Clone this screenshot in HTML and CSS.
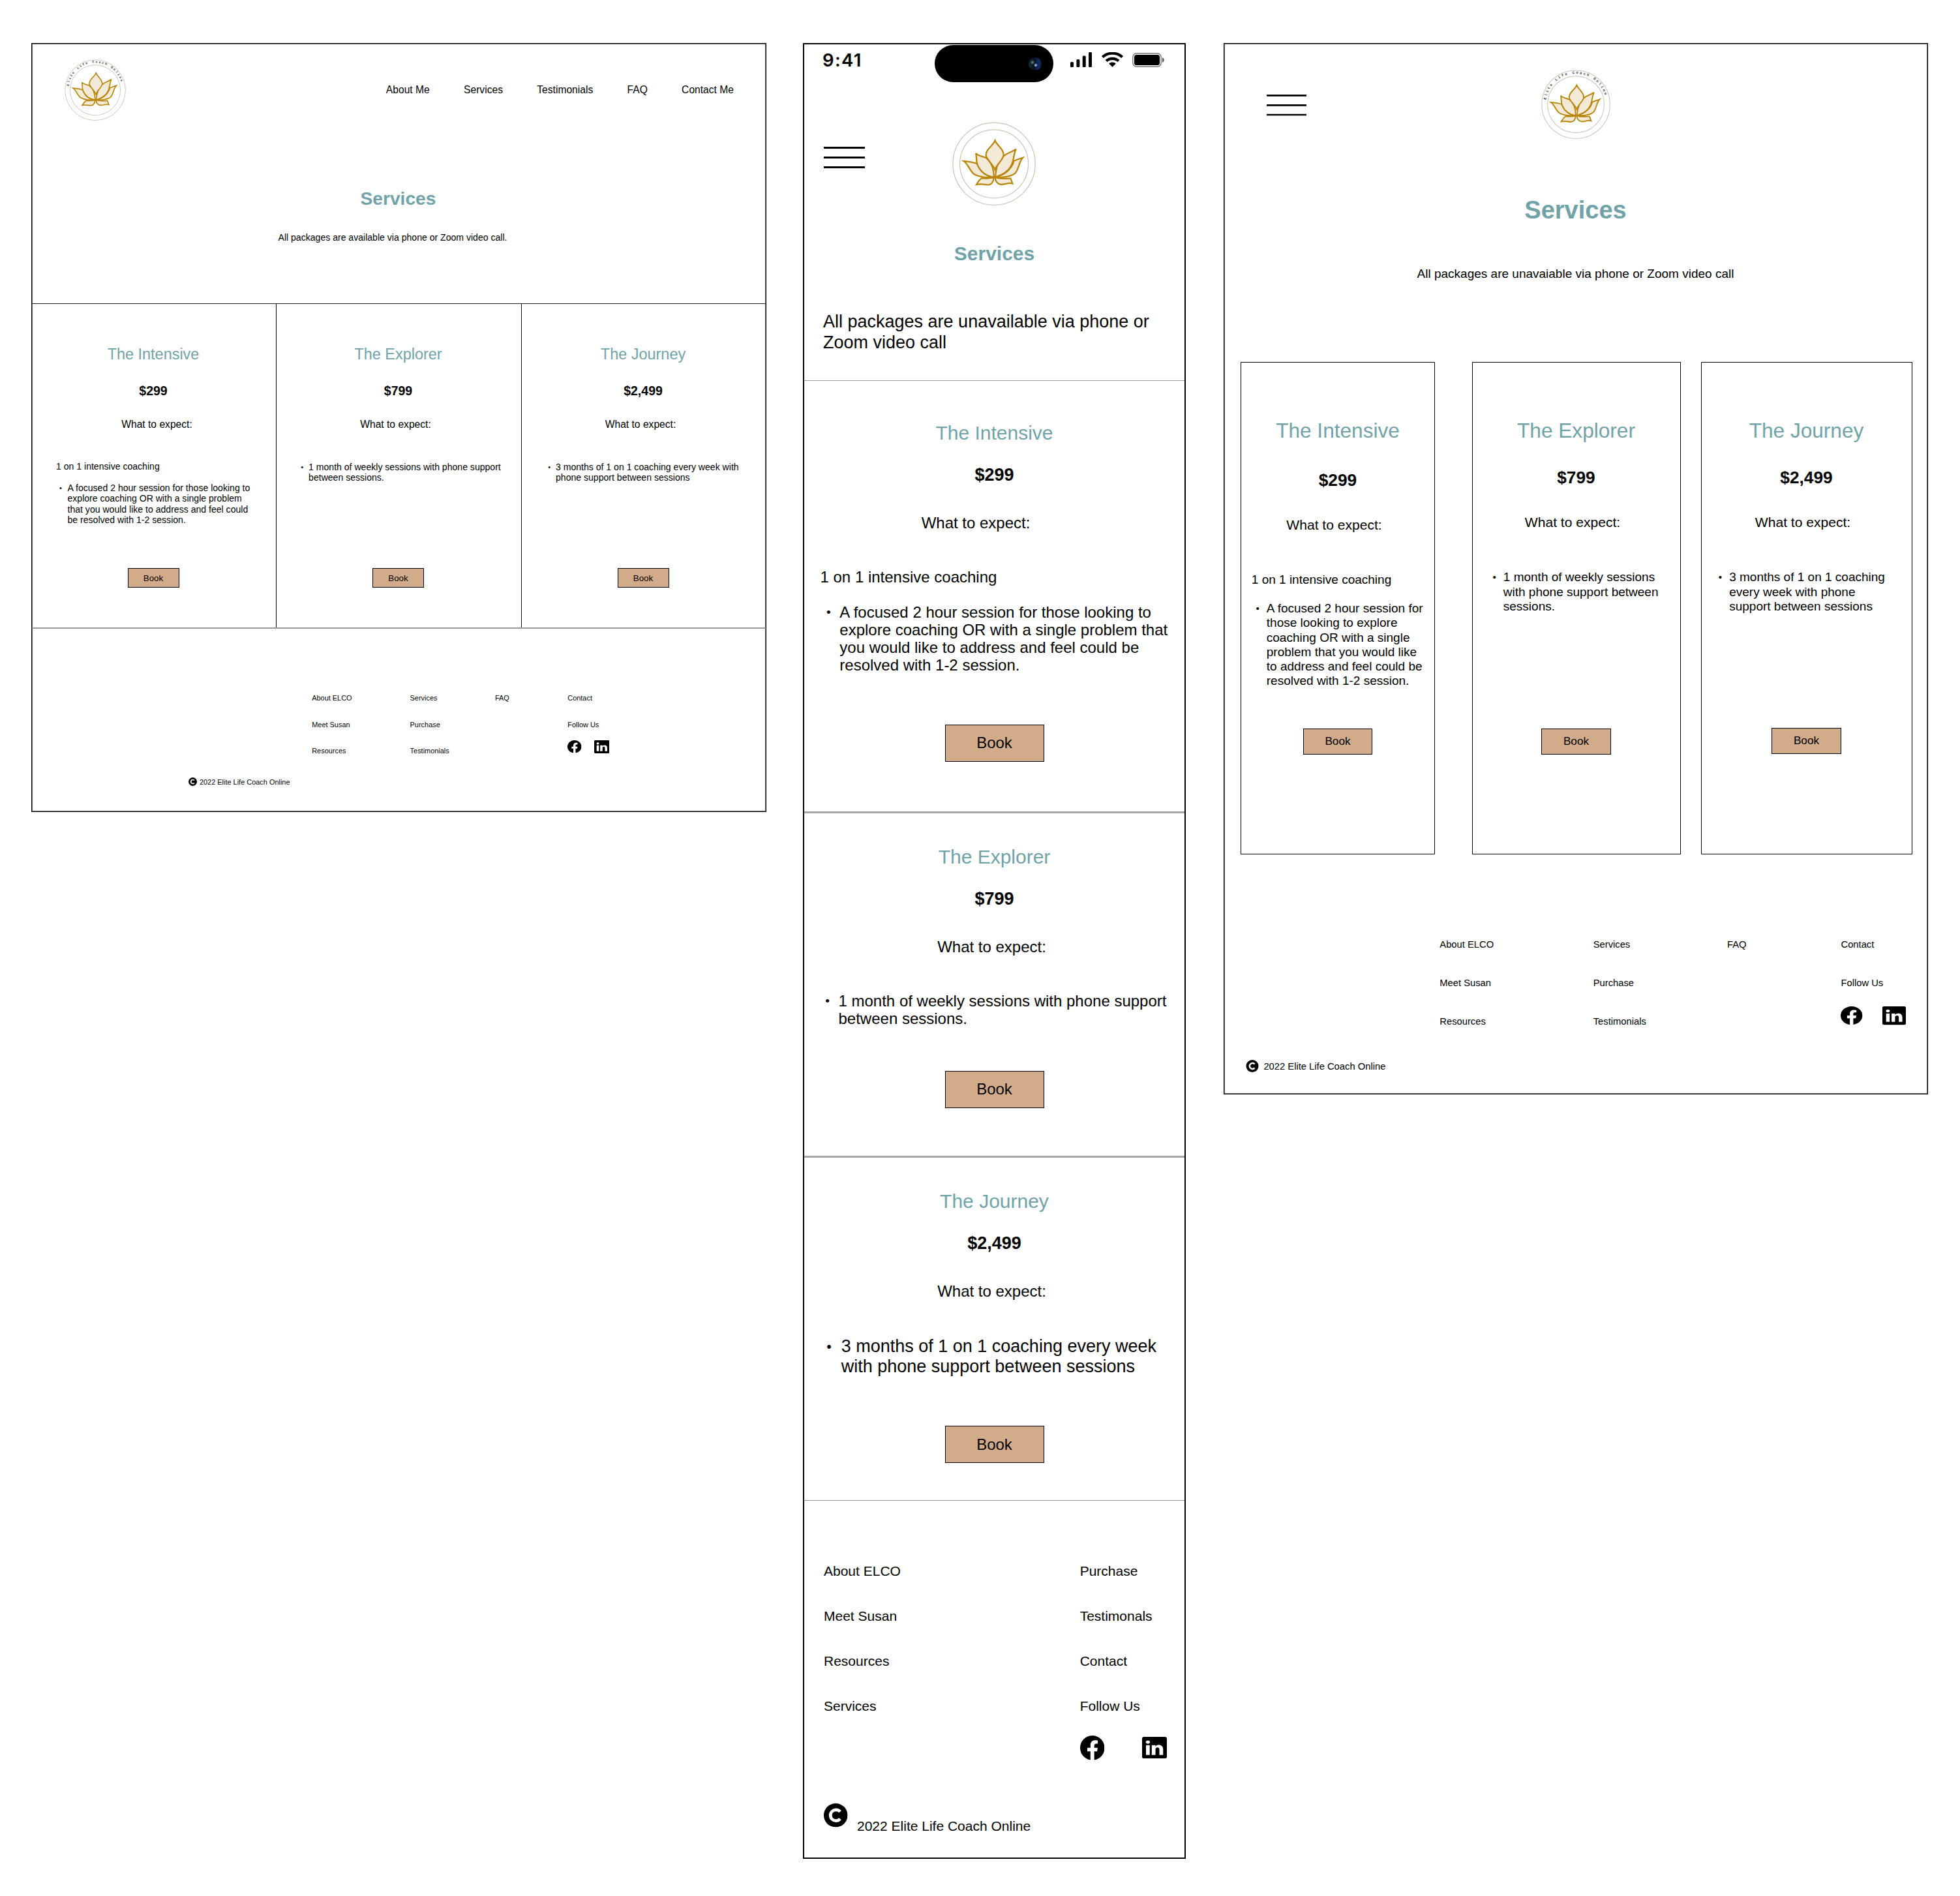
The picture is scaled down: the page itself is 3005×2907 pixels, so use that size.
FILE: index.html
```html
<!DOCTYPE html>
<html lang="en">
<head>
  <meta charset="UTF-8">
  <meta name="viewport" content="width=device-width, initial-scale=1.0">
  <title>Elite Life Coach Online - Services</title>
  <link rel="stylesheet" href="styles.css">
</head>
<body>

  <!-- Shared icons -->
  <svg class="sprite">
    <symbol id="lotus" viewBox="27 30 283 283">
      <g fill="none" stroke="#c6c7b4" stroke-width="2.8">
        <circle cx="168.6" cy="172" r="139.5"/>
        <circle cx="168.6" cy="172" r="116"/>
      </g>
      <g fill="#f2e9d6" stroke="#b8860b" stroke-width="5" stroke-linejoin="miter">
        <path d="M66 163C82 164 98 166 112 172C118 194 138 212 164 217C148 220 118 217 101 207C86 196 82 174 66 163Z"/>
        <path d="M266 151C250 156 244 158 236 162C230 186 208 208 177 216C200 220 226 215 240 204C254 188 252 166 266 151Z"/>
        <path d="M107 136C116 146 128 146 141 151C158 164 168 184 168 217C142 214 122 198 112 174C107 160 110 148 107 136Z"/>
        <path d="M243 122C230 132 214 134 201 146C184 160 176 180 173 217C202 208 226 190 232 164C237 148 236 136 243 122Z"/>
        <path d="M172 93C165 112 141 120 141 144C146 160 164 172 172 192C178 172 196 162 201 144C202 122 180 112 172 93Z"/>
        <path d="M168 217C154 223 140 221 126 221C118 226 114 234 109 242C122 238 134 243 148 243C160 243 167 232 168 217Z"/>
        <path d="M172 217C186 224 206 222 224 221C228 226 228 232 231 239C218 234 204 243 192 242C180 240 173 230 172 217Z"/>
      </g>
    </symbol>
    <symbol id="facebook" viewBox="0 0 16 16" preserveAspectRatio="none">
      <path d="M16 8.049c0-4.446-3.582-8.05-8-8.05C3.58 0-.002 3.603-.002 8.05c0 4.017 2.926 7.347 6.75 7.951v-5.625h-2.03V8.05H6.75V6.275c0-2.017 1.195-3.131 3.022-3.131.876 0 1.791.157 1.791.157v1.98h-1.009c-.993 0-1.303.621-1.303 1.258v1.51h2.218l-.354 2.326H9.25V16c3.824-.604 6.75-3.934 6.75-7.951"/>
    </symbol>
    <symbol id="linkedin" viewBox="0 0 16 16" preserveAspectRatio="none">
      <path d="M0 1.146C0 .513.526 0 1.175 0h13.65C15.474 0 16 .513 16 1.146v13.708c0 .633-.526 1.146-1.175 1.146H1.175C.526 16 0 15.487 0 14.854zm4.943 12.248V6.169H2.542v7.225zm-1.2-8.212c.837 0 1.358-.554 1.358-1.248-.015-.709-.52-1.248-1.342-1.248S2.4 3.226 2.4 3.934c0 .694.521 1.248 1.327 1.248zm4.908 8.212V9.359c0-.216.016-.432.08-.586.173-.431.568-.878 1.232-.878.869 0 1.216.662 1.216 1.634v3.865h2.401V9.25c0-2.22-1.184-3.252-2.764-3.252-1.274 0-1.845.7-2.165 1.193v.025h-.016l.016-.025V6.169h-2.4c.03.678 0 7.225 0 7.225z"/>
    </symbol>
    <symbol id="copyright" viewBox="0 0 16 16">
      <circle cx="8" cy="8" r="8"/>
      <path d="M11 5.6A3.7 3.7 0 1 0 11 10.4" fill="none" stroke="#fff" stroke-width="2.1"/>
    </symbol>
    <symbol id="menu" viewBox="0 0 63 33" preserveAspectRatio="none">
      <path d="M0 1.5H63M0 16.5H63M0 31.5H63" stroke="#000" stroke-width="2.8"/>
    </symbol>
  </svg>

  <!-- Desktop -->
  <div class="frame desktop">
    <header class="header">
      <svg class="logo" viewBox="27 30 283 283">
        <use href="#lotus" x="27" y="30" width="283" height="283"/>
        <path id="ring" d="M46.6 153A123.5 123.5 0 0 1 292 158" fill="none"/>
        <text class="logo-text"><textPath href="#ring">Elite Life Coach Online</textPath></text>
      </svg>
      <nav class="nav">
        <a>About Me</a>
        <a>Services</a>
        <a>Testimonials</a>
        <a>FAQ</a>
        <a>Contact Me</a>
      </nav>
    </header>

    <h1>Services</h1>
    <p class="intro">All packages are available via phone or Zoom video call.</p>

    <section class="cards">
      <div class="card intensive">
        <h2>The Intensive</h2>
        <div class="price">$299</div>
        <div class="expect">What to expect:</div>
        <div class="details">
          <p>1 on 1 intensive coaching</p>
          <ul><li>A focused 2 hour session for those looking to explore coaching OR with a single problem that you would like to address and feel could be resolved with 1-2 session.</li></ul>
        </div>
        <a class="book">Book</a>
      </div>
      <div class="card explorer">
        <h2>The Explorer</h2>
        <div class="price">$799</div>
        <div class="expect">What to expect:</div>
        <div class="details">
          <ul><li>1 month of weekly sessions with phone support between sessions.</li></ul>
        </div>
        <a class="book">Book</a>
      </div>
      <div class="card journey">
        <h2>The Journey</h2>
        <div class="price">$2,499</div>
        <div class="expect">What to expect:</div>
        <div class="details">
          <ul><li>3 months of 1 on 1 coaching every week with phone support between sessions</li></ul>
        </div>
        <a class="book">Book</a>
      </div>
    </section>

    <footer>
      <div class="links">
        <div class="col"><a>About ELCO</a><a>Meet Susan</a><a>Resources</a></div>
        <div class="col"><a>Services</a><a>Purchase</a><a>Testimonials</a></div>
        <div class="col"><a>FAQ</a></div>
        <div class="col">
          <a>Contact</a><a>Follow Us</a>
          <div class="social">
            <svg class="fb"><use href="#facebook"/></svg>
            <svg class="in"><use href="#linkedin"/></svg>
          </div>
        </div>
      </div>
      <div class="copy">
        <svg class="c"><use href="#copyright"/></svg>
        <span>2022 Elite Life Coach Online</span>
      </div>
    </footer>
  </div>

  <!-- Mobile -->
  <div class="frame mobile">
    <div class="status">
      <span class="time">9:41</span>
      <div class="island"><span class="camera"></span></div>
      <svg class="signal" viewBox="0 0 33 23">
        <rect x="0" y="15" width="5" height="8" rx="1.5"/>
        <rect x="9.4" y="11" width="5" height="12" rx="1.5"/>
        <rect x="18.7" y="5.6" width="5" height="17.4" rx="1.5"/>
        <rect x="28" y="0" width="5" height="23" rx="1.5"/>
      </svg>
      <svg class="wifi" viewBox="0 0 33 23">
        <path d="M1.4 7.6C9.6-.2 23.4-.2 31.6 7.6" fill="none" stroke="#000" stroke-width="4.2"/>
        <path d="M7 13.6C12.2 8.6 20.8 8.6 26 13.6" fill="none" stroke="#000" stroke-width="4.2"/>
        <path d="M11.2 17.4C14.2 14.8 18.8 14.8 21.8 17.4L16.5 22.8Z"/>
      </svg>
      <svg class="battery" viewBox="0 0 49 22">
        <rect x=".8" y=".8" width="43.4" height="20.4" rx="6" fill="none" stroke="#777" stroke-width="1.5"/>
        <rect x="3" y="3" width="39" height="16" rx="3.6"/>
        <path d="M46 7.2C49.6 8.4 49.6 13.6 46 14.8Z" fill="#555"/>
      </svg>
    </div>
    <header class="header">
      <svg class="menu"><use href="#menu"/></svg>
      <svg class="logo"><use href="#lotus"/></svg>
    </header>

    <h1>Services</h1>
    <p class="intro">All packages are unavailable via phone or Zoom video call</p>

    <section class="cards">
      <div class="card intensive">
        <h2>The Intensive</h2>
        <div class="price">$299</div>
        <div class="expect">What to expect:</div>
        <div class="details">
          <p>1 on 1 intensive coaching</p>
          <ul><li>A focused 2 hour session for those looking to explore coaching OR with a single problem that you would like to address and feel could be resolved with 1-2 session.</li></ul>
        </div>
        <a class="book">Book</a>
      </div>
      <div class="card explorer">
        <h2>The Explorer</h2>
        <div class="price">$799</div>
        <div class="expect">What to expect:</div>
        <div class="details">
          <ul><li>1 month of weekly sessions with phone support between sessions.</li></ul>
        </div>
        <a class="book">Book</a>
      </div>
      <div class="card journey">
        <h2>The Journey</h2>
        <div class="price">$2,499</div>
        <div class="expect">What to expect:</div>
        <div class="details">
          <ul><li>3 months of 1 on 1 coaching every week with phone support between sessions</li></ul>
        </div>
        <a class="book">Book</a>
      </div>
    </section>

    <footer>
      <div class="links">
        <div class="col"><a>About ELCO</a><a>Meet Susan</a><a>Resources</a><a>Services</a></div>
        <div class="col">
          <a>Purchase</a><a>Testimonals</a><a>Contact</a><a>Follow Us</a>
          <div class="social">
            <svg class="fb"><use href="#facebook"/></svg>
            <svg class="in"><use href="#linkedin"/></svg>
          </div>
        </div>
      </div>
      <div class="copy">
        <svg class="c"><use href="#copyright"/></svg>
        <span>2022 Elite Life Coach Online</span>
      </div>
    </footer>
  </div>

  <!-- Tablet -->
  <div class="frame tablet">
    <header class="header">
      <svg class="menu"><use href="#menu"/></svg>
      <svg class="logo" viewBox="27 30 283 283">
        <use href="#lotus" x="27" y="30" width="283" height="283"/>
        <text class="logo-text"><textPath href="#ring">Elite Life Coach Online</textPath></text>
      </svg>
    </header>

    <h1>Services</h1>
    <p class="intro">All packages are unavaiable via phone or Zoom video call</p>

    <section class="cards">
      <div class="card intensive">
        <h2>The Intensive</h2>
        <div class="price">$299</div>
        <div class="expect">What to expect:</div>
        <div class="details">
          <p>1 on 1 intensive coaching</p>
          <ul><li>A focused 2 hour session for those looking to explore coaching OR with a single problem that you would like to address and feel could be resolved with 1-2 session.</li></ul>
        </div>
        <a class="book">Book</a>
      </div>
      <div class="card explorer">
        <h2>The Explorer</h2>
        <div class="price">$799</div>
        <div class="expect">What to expect:</div>
        <div class="details">
          <ul><li>1 month of weekly sessions with phone support between sessions.</li></ul>
        </div>
        <a class="book">Book</a>
      </div>
      <div class="card journey">
        <h2>The Journey</h2>
        <div class="price">$2,499</div>
        <div class="expect">What to expect:</div>
        <div class="details">
          <ul><li>3 months of 1 on 1 coaching every week with phone support between sessions</li></ul>
        </div>
        <a class="book">Book</a>
      </div>
    </section>

    <footer>
      <div class="links">
        <div class="col"><a>About ELCO</a><a>Meet Susan</a><a>Resources</a></div>
        <div class="col"><a>Services</a><a>Purchase</a><a>Testimonials</a></div>
        <div class="col"><a>FAQ</a></div>
        <div class="col">
          <a>Contact</a><a>Follow Us</a>
          <div class="social">
            <svg class="fb"><use href="#facebook"/></svg>
            <svg class="in"><use href="#linkedin"/></svg>
          </div>
        </div>
      </div>
      <div class="copy">
        <svg class="c"><use href="#copyright"/></svg>
        <span>2022 Elite Life Coach Online</span>
      </div>
    </footer>
  </div>

</body>
</html>
```
FILE: styles.css
```css
* {
  box-sizing: border-box;
  margin: 0;
  padding: 0;
}

body {
  font-family: "Liberation Sans", Arial, Helvetica, sans-serif;
  background-color: #fff;
  color: #000;
  display: flex;
  align-items: flex-start;
  padding: 66px 0 0 48px;
  height: 2907px;
}

svg {
  display: block;
  flex: none;
}

.sprite {
  position: absolute;
  width: 0;
  height: 0;
}

.frame {
  flex: none;
  background-color: #fff;
  border: 1px solid #000;
  box-shadow: inset 0 0 0 1px #666;
}

.header {
  display: flex;
  align-items: flex-start;
}

.logo-text {
  font-family: "Liberation Mono", monospace;
  font-size: 15px;
  font-weight: bold;
  letter-spacing: 5.8px;
  fill: #333;
}

h1 {
  color: #6fa3a8;
  font-weight: bold;
  text-align: center;
}

.intro {
  text-align: center;
}

.card {
  display: flex;
  flex-direction: column;
  align-items: center;
}

h2 {
  color: #6fa3a8;
  font-weight: 400;
}

.price {
  font-weight: bold;
}

.details {
  align-self: stretch;
}

ul {
  list-style: none;
}

li {
  display: flex;
}

li::before {
  content: "•";
  flex: none;
  font-size: 0.8em;
  text-indent: 0.06em;
}

.book {
  display: flex;
  align-items: center;
  justify-content: center;
  background-color: #d2ab8b;
  border: 1px solid #000;
}

.links {
  display: grid;
}

.col {
  display: flex;
  flex-direction: column;
}

.social,
.copy {
  display: flex;
  align-items: flex-start;
}

/* desktop */
.desktop {
  width: 1127px;
  height: 1179px;
}

.desktop .header {
  align-items: center;
  justify-content: space-between;
  padding: 24px 49px 0 50px;
}

.desktop .logo {
  width: 94px;
  height: 94px;
}

.nav {
  display: flex;
  gap: 52.3px;
  font-size: 15.64px;
  line-height: 18px;
}

.desktop h1 {
  margin-top: 103px;
  padding-right: 2px;
  font-size: 28.15px;
  line-height: 34px;
}

.desktop .intro {
  margin-top: 34px;
  padding-right: 19px;
  font-size: 14.07px;
  line-height: 17px;
}

.desktop .cards {
  display: grid;
  grid-template-columns: 375px 376px 374px;
  margin-top: 92px;
  height: 499px;
  border-top: 1px solid #222;
  border-bottom: 2px solid #999;
}

.desktop .card {
  padding: 63px 2px 0 0;
}

.desktop .intensive {
  border-right: 1px solid #000;
}

.desktop .explorer {
  border-right: 1px solid #111;
}

.desktop h2 {
  font-size: 23.45px;
  line-height: 28px;
}

.desktop .price {
  margin-top: 30px;
  font-size: 19.55px;
  line-height: 24px;
}

.desktop .expect {
  margin-top: 31px;
  padding-right: 8px;
  font-size: 15.64px;
  line-height: 18px;
}

.desktop .intensive .expect {
  padding: 0 0 0 11px;
}

.desktop .details {
  height: 211px;
  padding-top: 48px;
  font-size: 14.07px;
  line-height: 16.42px;
}

.desktop .intensive .details {
  padding-top: 47.4px;
}

.desktop .details p {
  margin: 0 0 16.2px 37px;
}

.desktop ul {
  width: 308px;
  margin-left: 36.7px;
}

.desktop .intensive ul {
  width: 300px;
  margin-left: 41.3px;
}

.desktop .journey ul {
  margin-left: 39.6px;
}

.desktop li::before {
  width: 12.4px;
}

.desktop .intensive li::before {
  width: 13.2px;
}

.desktop .book {
  width: 79px;
  height: 30px;
  font-size: 13.3px;
}

.desktop footer {
  padding-top: 99px;
  font-size: 10.95px;
  line-height: 14px;
}

.desktop .links {
  grid-template-columns: 150.4px 130.4px 111.3px auto;
  padding-left: 429.2px;
}

.desktop .col a + a {
  margin-top: 26.7px;
}

.desktop .social {
  margin-top: 17.5px;
  gap: 19px;
}

.desktop .fb {
  width: 21.5px;
  height: 19.5px;
}

.desktop .in {
  width: 23.5px;
  height: 20px;
}

.desktop .copy {
  margin-top: 33.6px;
  padding-left: 239.5px;
  gap: 4.4px;
}

.desktop .c {
  width: 13px;
  height: 13px;
}

/* mobile */
.mobile {
  width: 587px;
  height: 2784px;
  margin-left: 56px;
  border-width: 2px;
  box-shadow: none;
}

.status {
  display: flex;
  align-items: flex-start;
  height: 59px;
  padding-left: 28px;
}

.time {
  width: 172px;
  margin-top: 8px;
  font-family: Inter, sans-serif;
  font-size: 27.5px;
  font-weight: 600;
  line-height: 32px;
  letter-spacing: 1.3px;
}

.island {
  display: flex;
  align-items: center;
  justify-content: flex-end;
  width: 182px;
  height: 57px;
  margin-top: 1px;
  padding-right: 18px;
  border-radius: 29px;
  background-color: #000;
}

.camera {
  width: 20px;
  height: 20px;
  border-radius: 50%;
  background: radial-gradient(circle at 55% 60%, #9fb4e8 0 6%, transparent 18%), radial-gradient(circle at 30% 38%, #4f7a78 0 5%, transparent 18%), linear-gradient(90deg, #12302f 0%, #0a1020 45%, #102f6c 80%, #081838 100%);
}

.signal {
  width: 33px;
  height: 23px;
  margin: 12px 0 0 26px;
}

.wifi {
  width: 33px;
  height: 23px;
  margin: 12px 0 0 15px;
}

.battery {
  width: 49px;
  height: 22px;
  margin: 13px 0 0 14px;
}

.mobile .header {
  padding: 60px 0 0 30px;
}

.mobile .menu {
  width: 63px;
  height: 33px;
  margin-top: 37.5px;
}

.mobile .logo {
  width: 128px;
  height: 128px;
  margin-left: 134.3px;
}

.mobile h1 {
  margin-top: 56px;
  font-size: 30px;
  line-height: 36px;
}

.mobile .intro {
  margin-top: 71px;
  padding-left: 29px;
  font-size: 27px;
  line-height: 31.5px;
  text-align: left;
}

.mobile .cards {
  margin-top: 42px;
  border-top: 1px solid #999;
}

.mobile .card {
  height: 528px;
  padding-top: 49px;
  border-bottom: 3px solid #a3a7a7;
}

.mobile .intensive {
  height: 663px;
  padding-top: 62px;
}

.mobile .journey {
  height: 526px;
  border-bottom: 1px solid #999;
}

.mobile h2 {
  font-size: 30px;
  line-height: 36px;
}

.mobile .price {
  margin-top: 30px;
  font-size: 27px;
  line-height: 32px;
}

.mobile .expect {
  margin-top: 44px;
  padding-right: 8px;
  font-size: 24px;
  line-height: 28px;
}

.mobile .intensive .expect {
  padding-right: 57px;
}

.mobile .details {
  height: 175.6px;
  padding-top: 54.8px;
  font-size: 24px;
  line-height: 27.1px;
}

.mobile .intensive .details {
  height: 294.6px;
  padding-top: 55px;
}

.mobile .journey .details {
  height: 192.4px;
  font-size: 27px;
  line-height: 31.5px;
}

.mobile .details p {
  margin: 0 0 26.8px 24.5px;
}

.mobile ul {
  width: 540px;
  margin-left: 31px;
}

.mobile .intensive ul {
  margin-left: 32.8px;
}

.mobile .journey ul {
  width: 525px;
  margin-left: 33px;
}

.mobile li::before {
  width: 21.5px;
}

.mobile .journey li::before {
  width: 23.7px;
}

.mobile .book {
  width: 152px;
  height: 57px;
  font-size: 24px;
}

.mobile footer {
  padding: 96px 0 0 30px;
  font-size: 21px;
  line-height: 24px;
}

.mobile .links {
  grid-template-columns: 392.7px auto;
}

.mobile .col a + a {
  margin-top: 45px;
}

.mobile .social {
  margin-top: 33px;
  gap: 57.4px;
}

.mobile .fb {
  width: 37.5px;
  height: 37.5px;
}

.mobile .in {
  width: 38px;
  height: 33px;
  margin-top: 1.7px;
}

.mobile .copy {
  margin-top: 66.5px;
  gap: 14.5px;
}

.mobile .copy span {
  margin-top: 22.5px;
}

.mobile .c {
  width: 36.5px;
  height: 36.5px;
}

/* tablet */
.tablet {
  width: 1080px;
  height: 1612px;
  margin-left: 58px;
}

.tablet .header {
  padding: 40px 0 0 65px;
}

.tablet .menu {
  width: 61px;
  height: 32.6px;
  margin-top: 38px;
}

.tablet .logo {
  width: 106px;
  height: 106px;
  margin-left: 360.2px;
}

.tablet h1 {
  margin-top: 86.7px;
  padding-right: 1px;
  font-size: 38px;
  line-height: 44px;
}

.tablet .intro {
  margin-top: 65.8px;
  padding-right: 1px;
  font-size: 19px;
  line-height: 22px;
}

.tablet .cards {
  display: grid;
  grid-template-columns: 298px 320px 324px;
  column-gap: 56.5px;
  margin: 123.5px 0 0 25px;
}

.tablet .card {
  height: 755px;
  padding-top: 85px;
  border: 1px solid #000;
}

.tablet .journey {
  margin-left: -25.5px;
  width: 324px;
}

.tablet h2 {
  font-size: 31.6px;
  line-height: 38px;
}

.tablet .price {
  margin-top: 37px;
  font-size: 26.3px;
  line-height: 32px;
}

.tablet .intensive .price {
  margin-top: 41px;
}

.tablet .expect {
  margin-top: 41.5px;
  padding-right: 11px;
  font-size: 21.07px;
  line-height: 24px;
}

.tablet .details {
  height: 303.5px;
  padding-top: 61px;
  font-size: 19px;
  line-height: 22.2px;
}

.tablet .intensive .details {
  height: 299.5px;
}

.tablet .journey .details {
  height: 302.5px;
}

.tablet .details p {
  margin: 0 0 21.6px 15.8px;
}

.tablet ul {
  width: 270px;
  margin-left: 30px;
}

.tablet .intensive ul {
  width: 264px;
  margin-left: 21.5px;
}

.tablet .journey ul {
  width: 268px;
  margin-left: 25.4px;
}

.tablet li::before {
  width: 17.3px;
}

.tablet .book {
  width: 106.5px;
  height: 40px;
  font-size: 17.2px;
}

.tablet footer {
  padding-top: 129.2px;
  font-size: 14.75px;
  line-height: 18px;
}

.tablet .links {
  grid-template-columns: 235.4px 205.3px 174.5px auto;
  padding-left: 330.3px;
}

.tablet .col a + a {
  margin-top: 40.9px;
}

.tablet .social {
  margin-top: 27.2px;
  gap: 30.5px;
}

.tablet .fb {
  width: 33.5px;
  height: 28px;
}

.tablet .in {
  width: 36px;
  height: 28.4px;
}

.tablet .copy {
  margin-top: 49.7px;
  padding-left: 33.4px;
  gap: 7px;
}

.tablet .copy span {
  margin-top: 1.3px;
}

.tablet .c {
  width: 20px;
  height: 19px;
}
```
